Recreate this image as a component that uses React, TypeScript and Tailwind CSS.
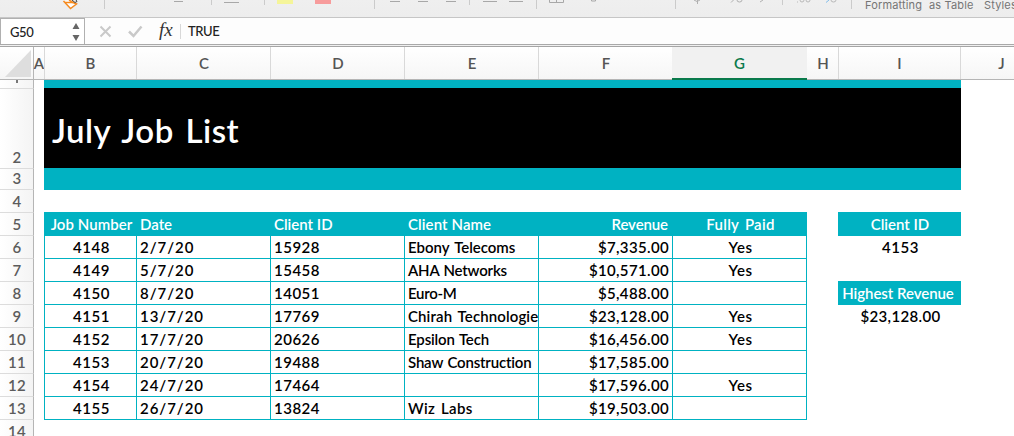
type Align = "left" | "center" | "right";

const columns = [
  { name: "A", cls: "w-[10px] text-[#555]" },
  { name: "B", cls: "w-[92px] border-l border-[#d9d9d9] text-[#555]" },
  { name: "C", cls: "w-[134px] border-l border-[#d9d9d9] text-[#555] pl-px" },
  { name: "D", cls: "w-[134px] border-l border-[#d9d9d9] text-[#555] pl-px" },
  { name: "E", cls: "w-[134px] border-l border-[#d9d9d9] text-[#555] pl-px" },
  { name: "F", cls: "w-[134px] border-l border-[#d9d9d9] text-[#555] pl-px" },
  { name: "G", cls: "-mb-px w-[135px] border-b-2 border-[#0a7a4b] bg-[#f1f1f1] pt-px text-[#0a7a4b]" },
  { name: "H", cls: "w-[31px] pl-px text-[#555]" },
  { name: "I", cls: "w-[122px] border-l border-[#d9d9d9] text-[#555]" },
  { name: "J", cls: "w-[82px] border-l border-[#d9d9d9] text-[#555]" },
];

const jobs = [
  { row: 6, job: "4148", date: "2/7/20", id: "15928", name: "Ebony Telecoms", track: "tracking-[-0.05px] [word-spacing:2px]", revenue: "$7,335.00", paid: "Yes" },
  { row: 7, job: "4149", date: "5/7/20", id: "15458", name: "AHA Networks", track: "tracking-[-0.2px] [word-spacing:1px]", revenue: "$10,571.00", paid: "Yes" },
  { row: 8, job: "4150", date: "8/7/20", id: "14051", name: "Euro-M", track: "tracking-[-0.3px]", revenue: "$5,488.00", paid: "" },
  { row: 9, job: "4151", date: "13/7/20", id: "17769", name: "Chirah Technologies", track: "tracking-[0.12px] [word-spacing:2px]", revenue: "$23,128.00", paid: "Yes" },
  { row: 10, job: "4152", date: "17/7/20", id: "20626", name: "Epsilon Tech", track: "tracking-[-0.15px] [word-spacing:1px]", revenue: "$16,456.00", paid: "Yes" },
  { row: 11, job: "4153", date: "20/7/20", id: "19488", name: "Shaw Construction", track: "tracking-[-0.18px] [word-spacing:1px]", revenue: "$17,585.00", paid: "" },
  { row: 12, job: "4154", date: "24/7/20", id: "17464", name: "", track: "", revenue: "$17,596.00", paid: "Yes" },
  { row: 13, job: "4155", date: "26/7/20", id: "13824", name: "Wiz Labs", track: "tracking-[0.3px] [word-spacing:2px]", revenue: "$19,503.00", paid: "" },
];

const justify: Record<Align, string> = {
  left: "justify-start pl-[3px]",
  center: "justify-center pl-[2px]",
  right: "justify-end pr-[3px]",
};

function Cell({ text, width, align = "left", track = "" }: { text: string; width: string; align?: Align; track?: string }) {
  return (
    <div className={`flex h-full shrink-0 items-center overflow-hidden border-b border-l border-[#00b2c2] ${width} ${justify[align]}`}>
      <span className={`whitespace-nowrap ${track}`}>{text}</span>
    </div>
  );
}

function Gutter({ label, height }: { label: string; height: string }) {
  return (
    <div className={`flex w-[34px] shrink-0 items-end justify-center overflow-hidden border-r border-b border-r-[#b5b5b5] border-b-[#dcdcdc] bg-linear-to-r from-white to-[#f4f4f4] pl-px text-[15px] leading-[21px] font-semibold tracking-[0.3px] text-[#5c5c5c] ${height}`}>
      <span>{label}</span>
    </div>
  );
}

function Toolbar() {
  return (
    <div className="flex h-[17px] shrink-0 bg-linear-to-b from-[#efefef] to-[#ededed]">
      <svg width="865" height="17" viewBox="0 0 865 17" className="block shrink-0" fill="none">
        <path d="M63.500 1l7 7.500 6-4.500-3.500-1.500-4-2.500" fill="#fff" stroke="#f58a1f" strokeWidth="1.5" />
        <path d="M65 2.500h8" stroke="#f58a1f" strokeWidth="1.5" />
        <path d="M72 0l3 2.500 2-1L76 0" stroke="#444" strokeWidth="1" />
        <path d="M104.500 0v9M374.500 0v9M536.500 0v9M675.500 0v9M851.500 0v9M211.500 0v5M264.500 0v5M469.500 0v5M782.500 0v5" stroke="#cbcbcb" />
        <path d="M174 1.500h9M224 2.500h15M390 1.500h10M418 1.500h10M446 1.500h10M483 1.500h14M509 1.500h14" stroke="#a8a8a8" />
        <rect x="277" y="0" width="16" height="4" fill="#f5f59a" />
        <rect x="315" y="0" width="16" height="4" fill="#f79c9c" />
        <path d="M549.500 0v2.500h14V0M556.500 0v2.500" stroke="#a8a8a8" />
        <path d="M591.500 0v1h4V0" stroke="#a8a8a8" />
        <path d="M694 0q3 3 6 0M697.500 0v4M731 2.500l3-3M737 0q0 2 2.500 2T742 0M760 2l3-2" stroke="#b0b0b0" />
        <path d="M797 2h1M800 0q0 2 2 2t2-2M806 0q0 2 2 2t2-2" stroke="#b9b9b9" />
        <path d="M826 2.500l3-2.500" stroke="#82bdea" />
        <path d="M831 0q0 2 2.500 2T836 0" stroke="#b9b9b9" />
      </svg>
      <div className="-mt-[3px] flex h-4 shrink-0 font-['Inter'] text-[11px] leading-4 font-normal tracking-[0.15px] whitespace-nowrap text-[#757575]">
        <span className="w-[64px]">Formatting</span>
        <span className="w-[55px]">as Table</span>
        <span>Styles</span>
      </div>
    </div>
  );
}

function FormulaBar() {
  return (
    <div className="flex h-[28px] shrink-0 border-t border-b border-t-[#c6c6c6] border-b-[#a9a9a9] bg-[#fdfdfd]">
      <div className="flex w-[85px] items-center justify-between border-x border-t border-[#b0b0b0] bg-white pr-1 pl-[9px]">
        <span className="pt-px font-['Lato'] text-[13px] font-medium tracking-[-0.4px] text-[#222]">G50</span>
        <svg width="8" height="20" viewBox="0 0 8 20" fill="#666">
          <path d="M4 1l3.500 6h-7zM4 19l3.500-6h-7z" />
        </svg>
      </div>
      <svg width="96" height="26" viewBox="0 0 96 26" className="shrink-0" fill="none">
        <path d="M15.500 8.500l10 10M25.500 8.500l-10 10" stroke="#c9c9c9" strokeWidth="2" />
        <path d="M44 13.500l4.500 4.500 8-9.500" stroke="#c9c9c9" strokeWidth="2.500" />
        <path d="M95.500 6v15" stroke="#d8d8d8" />
        <text x="74" y="18" fill="#333" fontFamily="Liberation Serif, serif" fontStyle="italic" fontWeight="400" fontSize="19">fx</text>
      </svg>
      <div className="flex items-center pl-[7px] font-['Lato'] text-[13px] font-medium tracking-[-0.4px] text-[#222]">TRUE</div>
    </div>
  );
}

export default function App() {
  return (
    <div className="flex h-[436px] w-[1014px] flex-col overflow-hidden bg-white font-['Lato',sans-serif] text-[15px] leading-[22px] font-semibold text-black [font-variant-ligatures:none]">
      <Toolbar />
      <FormulaBar />
      <div className="h-px shrink-0 bg-[#f0f0f0]" />
      <div className="flex h-[34px] shrink-0 border-t border-b border-t-[#a5a5a5] border-b-[#b5b5b5] bg-linear-to-b from-white to-[#f6f6f6]">
        <div className="flex w-[34px] shrink-0 items-end border-r border-[#b5b5b5] pb-[2px] pl-[5px]">
          <svg width="26" height="27" viewBox="0 0 26 27"><path d="M26 0v27H0z" fill="#dedede" /></svg>
        </div>
        {columns.map((c) => (
          <div key={c.name} className={`flex shrink-0 items-center justify-center text-[15px] font-semibold ${c.cls}`}>{c.name}</div>
        ))}
      </div>
      <div className="flex shrink-0">
        <div className="flex shrink-0 flex-col">
          <div className="flex h-[9px] w-[34px] items-start justify-center border-r border-b border-r-[#b5b5b5] border-b-[#dcdcdc] bg-linear-to-r from-white to-[#f4f4f4]">
            <div className="h-[3px] w-[2px] bg-[#777]" />
          </div>
          <Gutter label="2" height="h-[80px]" />
          <Gutter label="3" height="h-[21px]" />
          <Gutter label="4" height="h-[23px]" />
          <Gutter label="5" height="h-[23px]" />
          {jobs.map((j) => <Gutter key={j.row} label={String(j.row)} height="h-[23px]" />)}
          <Gutter label="14" height="h-[23px]" />
        </div>
        <div className="ml-[10px] w-[917px] shrink-0">
          <div className="h-[8px] bg-[#00b2c2]" />
          <div className="flex h-[80px] items-center bg-black pt-[4px] pl-[8px] text-[33px] leading-10 font-semibold tracking-[0.5px] text-white [word-spacing:3px]">July Job List</div>
          <div className="h-[22px] bg-[#00b2c2]" />
          <div className="mt-[22px] flex">
            <div className="w-[763px] shrink-0 border-r border-[#00b2c2]">
              <div className="flex h-[24px] bg-[#00b2c2] pt-px text-white">
                <Cell text="Job Number" width="w-[92px]" align="center" track="tracking-[0.05px]" />
                <Cell text="Date" width="w-[134px]" />
                <Cell text="Client ID" width="w-[134px]" />
                <Cell text="Client Name" width="w-[134px]" track="tracking-[0.1px]" />
                <Cell text="Revenue" width="w-[134px]" align="right" track="pr-px tracking-[-0.1px]" />
                <Cell text="Fully Paid" width="w-[134px]" align="center" track="tracking-[0.3px] [word-spacing:2px]" />
              </div>
              {jobs.map((j) => (
                <div key={j.row} className="flex h-[23px]">
                  <Cell text={j.job} width="w-[92px]" align="center" track="tracking-[0.6px]" />
                  <Cell text={j.date} width="w-[134px]" track="tracking-[0.95px]" />
                  <Cell text={j.id} width="w-[134px]" track="tracking-[0.5px]" />
                  <Cell text={j.name} width="w-[134px]" track={j.track} />
                  <Cell text={j.revenue} width="w-[134px]" align="right" track="tracking-[0.35px]" />
                  <Cell text={j.paid} width="w-[134px]" align="center" track="tracking-[0.6px]" />
                </div>
              ))}
            </div>
            <div className="ml-[31px] w-[123px] text-center leading-[25px]">
              <div className="h-[24px] bg-[#00b2c2] pl-px text-white">Client ID</div>
              <div className="h-[23px] pl-[2px] leading-[22px] tracking-[0.6px]">4153</div>
              <div className="mt-[22px] h-[24px] bg-[#00b2c2] pr-[3px] tracking-[-0.05px] text-white">Highest Revenue</div>
              <div className="h-[23px] pl-[2px] leading-[22px] tracking-[0.35px]">$23,128.00</div>
            </div>
          </div>
        </div>
      </div>
    </div>
  );
}
